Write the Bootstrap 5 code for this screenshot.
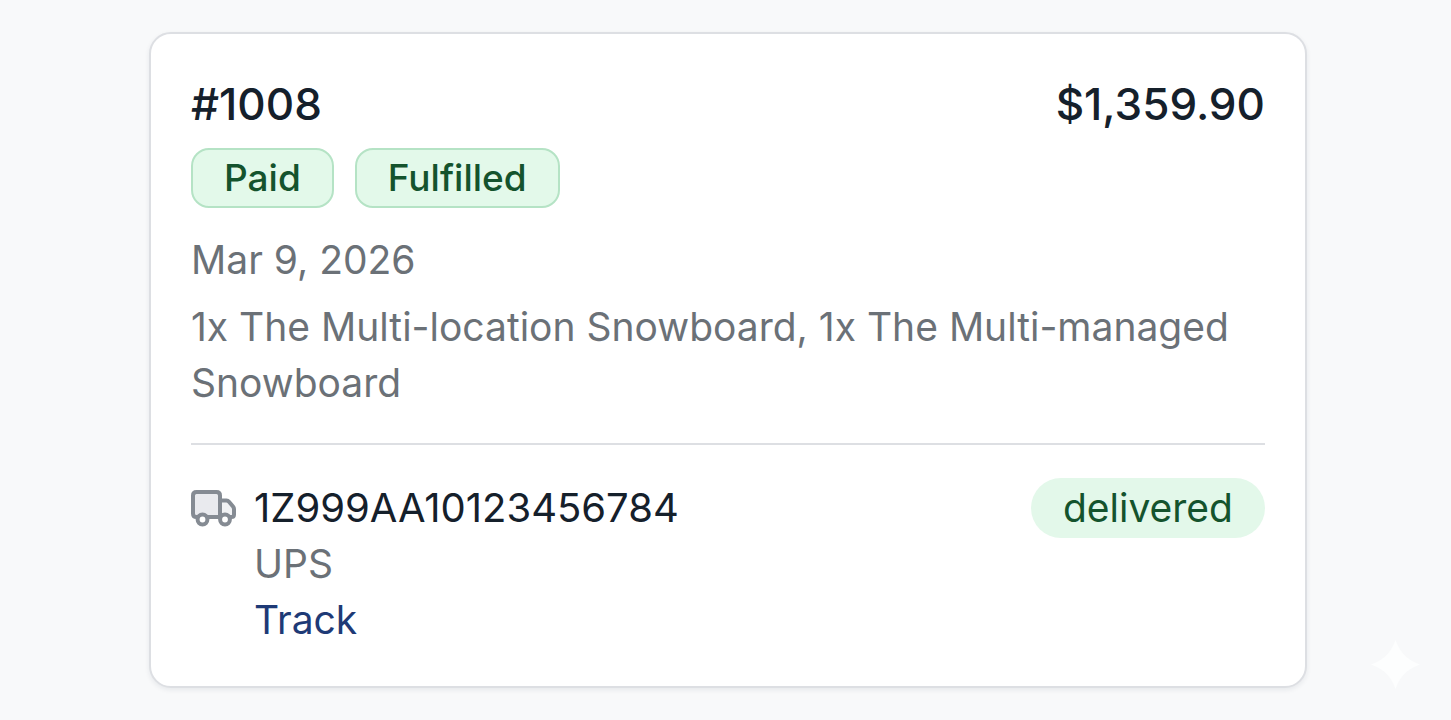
<!DOCTYPE html>
<html lang="en">
<head>
<meta charset="utf-8">
<meta name="viewport" content="width=device-width, initial-scale=1">
<title>Order #1008</title>
<link href="https://cdn.jsdelivr.net/npm/bootstrap@5.3.0/dist/css/bootstrap.min.css" rel="stylesheet">
<style>
body { background: #f8f9fa; font-family: Inter, "Liberation Sans", sans-serif; font-size: 39px; line-height: 56px; color: #6b7177; min-height: 100vh; }
.page-wrap { padding: 32px 144px 32px 149px; }
.order-card { --bs-card-border-width: 2px; --bs-card-border-color: #dddfe3; --bs-card-border-radius: 22px; padding: 40px 40px 38px; color: inherit; box-shadow: 0 2px 5px rgba(30,40,60,.08); }
.ink { color: #15202b; }
.order-title { font-size: 44px; line-height: 60px; font-weight: 500; }
.status-row { gap: 21px; margin-top: 14px; }
.status { font-size: 37px; line-height: 56px; font-weight: 500; color: #14532d; background: #e3f9ea; border: 2px solid #b5e3c5; border-radius: 18px; padding: 0 31px; }
.items { margin: 11px 0 32px; }
.shipment { border-top: 2px solid #dddfe3; padding-top: 33px; gap: 17px; }
.tracking { padding-top: 2px; }
.tracking-number { font-size: 40px; }
.state { color: #14532d; background: #e3f8ea; line-height: 60px; padding: 0 32px; }
.track { color: #1e3a76; }
.truck { width: 46px; height: 40px; margin-top: 10px; }
.spark { right: 31px; bottom: 31px; width: 49px; height: 49px; }
@media (max-width: 1000px) { .page-wrap { padding: 16px; } }
</style>
</head>
<body class="position-relative">
<main class="page-wrap">
<article class="card order-card">
  <header class="d-flex flex-wrap justify-content-between order-title ink">
    <h1 class="order-title m-0">#1008</h1>
    <span>$1,359.90</span>
  </header>
  <div class="status-row d-flex flex-wrap">
    <span class="status">Paid</span>
    <span class="status">Fulfilled</span>
  </div>
  <time datetime="2026-03-09" class="mt-4">Mar 9, 2026</time>
  <p class="items">1x The Multi-location Snowboard, 1x The Multi-managed Snowboard</p>
  <div class="shipment d-flex align-items-start">
    <svg class="truck flex-shrink-0" viewBox="0 0 46 40" fill="none" stroke="#858b93" stroke-width="4" stroke-linejoin="round" aria-hidden="true">
      <path fill="#e9eaee" d="M5.500 4H25.500Q29 4 29 7.500V29H5.500Q2 29 2 25.500V7.500Q2 4 5.500 4Z"/>
      <path fill="#f1f2f4" d="M29 12.500H35.500Q37 12.500 38 13.700L42 18.500Q43 19.700 43 21V26.500Q43 29 40.500 29H29Z"/>
      <circle cx="11.500" cy="31.500" r="4.900" fill="#fff"/>
      <circle cx="34" cy="31.500" r="4.900" fill="#fff"/>
    </svg>
    <div class="tracking flex-grow-1">
      <div class="tracking-number ink">1Z999AA10123456784</div>
      <div>UPS</div>
      <a class="track d-inline-block text-decoration-none align-top" href="#track">Track</a>
    </div>
    <span class="state rounded-pill">delivered</span>
  </div>
</article>
</main>
<svg class="spark position-absolute" viewBox="0 0 48 48" fill="#fdfefe" aria-hidden="true"><path d="M24 0Q30 18 48 24Q30 30 24 48Q18 30 0 24Q18 18 24 0Z"/></svg>
<script src="https://cdn.jsdelivr.net/npm/bootstrap@5.3.0/dist/js/bootstrap.bundle.min.js"></script>
</body>
</html>
